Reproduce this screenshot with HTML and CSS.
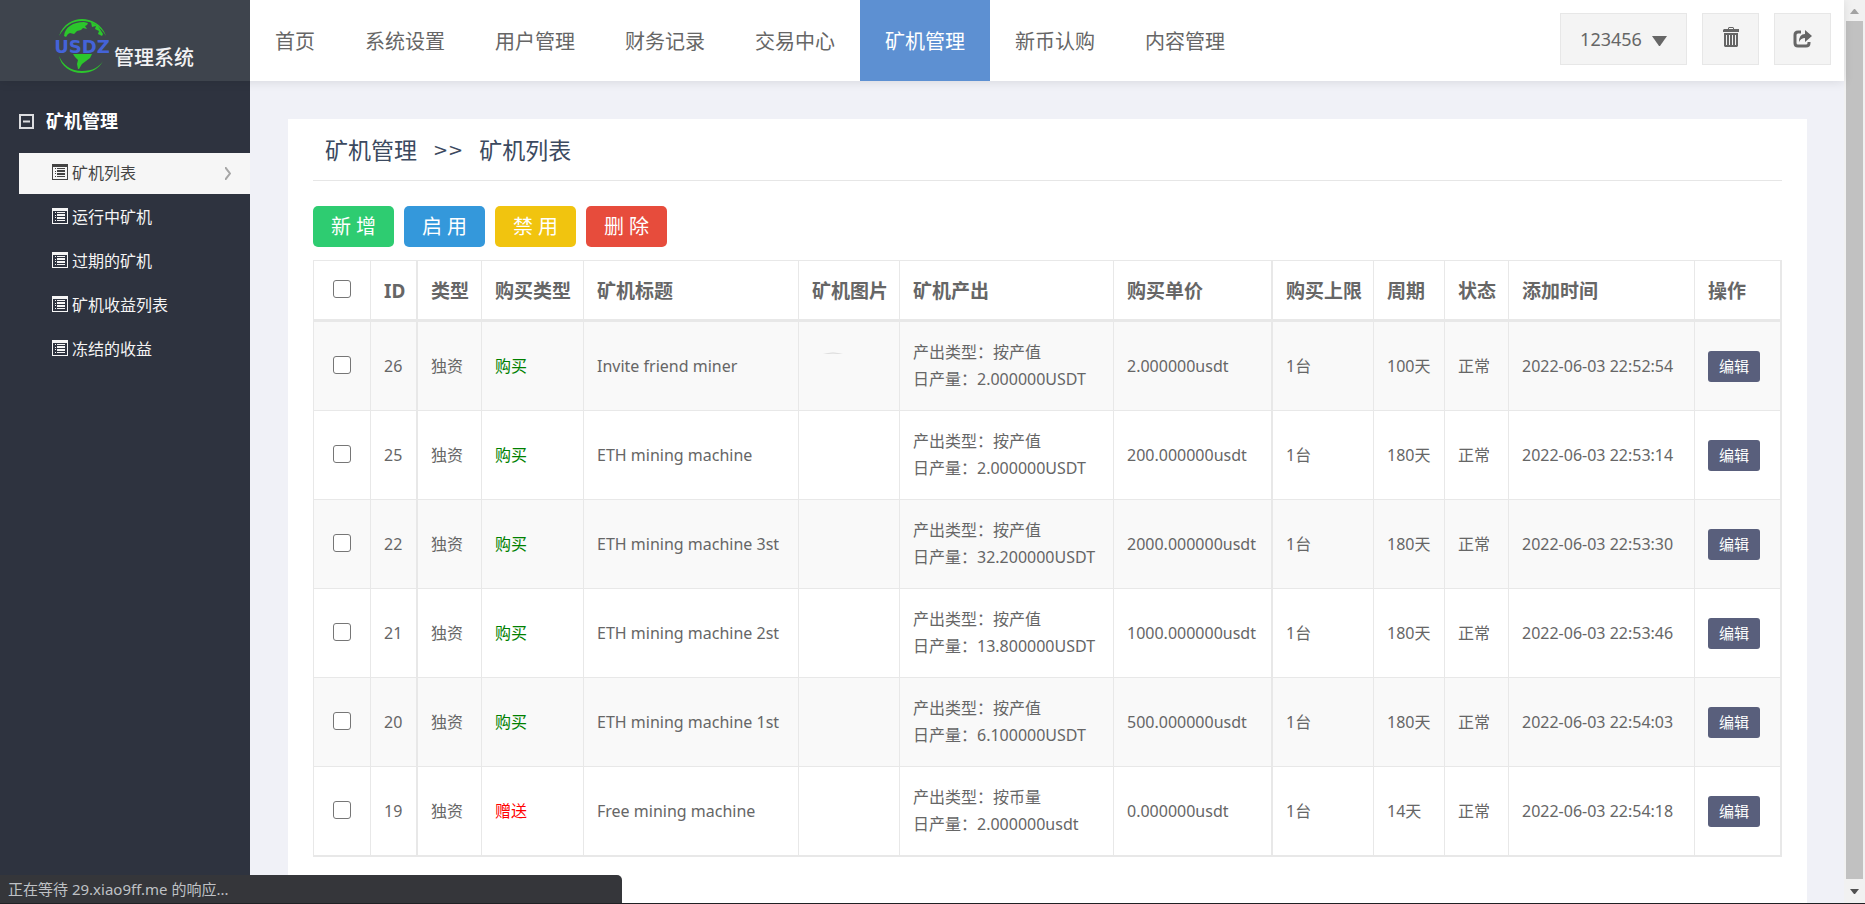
FILE: index.html
```html
<!DOCTYPE html>
<html lang="zh-CN">
<head>
<meta charset="utf-8">
<title>矿机列表 - 管理系统</title>
<link rel="stylesheet" href="styles.css">
</head>
<body>
<svg class="sprite" aria-hidden="true">
  <symbol id="list" viewBox="0 0 16 16">
    <path fill="currentColor" fill-rule="evenodd" d="M0 0h16v16H0zM1 3v12h14V3z"/>
    <path fill="currentColor" d="M3 4h1v1H3zM5 4h8v1H5zM3 7h1v1H3zM5 6h8v2H5zM3 9h1v1H3zM5 9h8v2H5zM3 12h1v1H3zM5 12h8v1H5z"/>
  </symbol>
</svg>
<div class="window">
  <div class="page">
    <header class="header">
      <a class="logo" href="#">
        <svg class="logo-mark" viewBox="0 0 58 54" role="img" aria-label="USDZ">
          <path fill="#2cc62c" d="M6 17C10 5 20 0 29 0s20 5 24 17C47 7 39 2 29 2S12 7 6 17z"/>
          <path fill="#2cc62c" d="M11 17C12 8 20 3 31 3l4 1-1 2-2 1 2 3-4-1-2 2-4 1-3 3-4-1-2 1-2 3zM38 3l7 4 5 8-1 2-4-2 1-3-4-2 1-3-4 1z"/>
          <path fill="#2cc62c" d="M20 35h19l-2 4-4 3-4 3-3 5-1 0-1-5 1-4-3-3zM6 37c4 9 12 15 23 15s17-4 21-10c-4 8-12 12-21 12C17 54 8 47 6 37z"/>
          <text class="logo-name" x="29" y="34" text-anchor="middle">USDZ</text>
        </svg>
        <span class="logo-text">管理系统</span>
      </a>
      <nav class="nav">
        <a href="#">首页</a><a href="#">系统设置</a><a href="#">用户管理</a><a href="#">财务记录</a><a href="#">交易中心</a><a class="active" href="#">矿机管理</a><a href="#">新币认购</a><a href="#">内容管理</a>
      </nav>
      <div class="tools">
        <button class="tool user" type="button">123456
          <svg width="15" height="10" viewBox="0 0 15 10"><path fill="currentColor" d="M0 0h15L8 10H7z"/></svg>
        </button>
        <button class="tool" type="button" aria-label="清除缓存">
          <svg class="trash" width="18" height="20" viewBox="0 0 18 20"><path fill="currentColor" fill-rule="evenodd" d="M6 2V1l1-1h4l1 1v1h5v3H1V3l1-1zM7 1v1h4V1zM2 6h14v13l-1 1H3l-1-1zM4 8v10h1V8zM7 8v10h1V8zM10 8v10h1V8zM13 8v10h1V8z"/></svg>
        </button>
        <button class="tool" type="button" aria-label="退出">
          <svg width="19" height="18" viewBox="0 0 19 18"><path fill="none" stroke="currentColor" stroke-width="3" d="M8 2H5Q2 2 2 5v8q0 3 3 3h8q3 0 3-3v-1"/><path fill="currentColor" d="M12 0l7 6-7 6V8Q8 8 6 12q0-8 6-8z"/></svg>
        </button>
      </div>
    </header>
    <div class="body">
      <aside class="sidebar">
        <h3 class="group">
          <svg width="15" height="15" viewBox="0 0 15 15"><path fill="none" stroke="currentColor" stroke-width="2" d="M1 1h13v13H1zM4 7.5h7"/></svg>
          矿机管理
        </h3>
        <a class="item current" href="#"><svg class="ico"><use href="#list"/></svg>矿机列表
          <svg class="arrow" viewBox="0 0 6 13"><path fill="none" stroke="#a6a6a6" stroke-width="2" d="M0 0l5 6.5L0 13"/></svg></a>
        <a class="item" href="#"><svg class="ico"><use href="#list"/></svg>运行中矿机</a>
        <a class="item" href="#"><svg class="ico"><use href="#list"/></svg>过期的矿机</a>
        <a class="item" href="#"><svg class="ico"><use href="#list"/></svg>矿机收益列表</a>
        <a class="item" href="#"><svg class="ico"><use href="#list"/></svg>冻结的收益</a>
      </aside>
      <main class="main">
        <section class="card">
          <h1 class="title"><span>矿机管理</span><span class="sep">&gt;&gt;</span><span>矿机列表</span></h1>
          <div class="actions">
            <button class="btn green" type="button">新 增</button>
            <button class="btn blue" type="button">启 用</button>
            <button class="btn yellow" type="button">禁 用</button>
            <button class="btn red" type="button">删 除</button>
          </div>
          <table class="grid">
            <colgroup><col class="w57"><col class="w47"><col class="w64"><col class="w102"><col class="w215"><col class="w101"><col class="w214"><col class="w159"><col class="w101"><col class="w71"><col class="w64"><col class="w186"><col class="w85"></colgroup>
            <thead>
              <tr><th class="check"><input type="checkbox" aria-label="全选"></th><th class="thick">ID</th><th>类型</th><th>购买类型</th><th>矿机标题</th><th>矿机图片</th><th>矿机产出</th><th class="thick">购买单价</th><th>购买上限</th><th>周期</th><th>状态</th><th>添加时间</th><th>操作</th></tr>
            </thead>
            <tbody>
              <tr><td class="check"><input type="checkbox" aria-label="26"></td><td class="thick">26</td><td>独资</td><td class="buy">购买</td><td>Invite friend miner</td><td class="pic"><svg width="24" height="4" viewBox="0 0 24 4"><path fill="#d5d5d5" d="M2 3q10-3 20 0-10-1-20 0z"/></svg></td><td>产出类型：按产值<br>日产量：2.000000USDT</td><td class="thick">2.000000usdt</td><td>1台</td><td>100天</td><td>正常</td><td>2022-06-03 22:52:54</td><td><button class="edit" type="button">编辑</button></td></tr>
              <tr><td class="check"><input type="checkbox" aria-label="25"></td><td class="thick">25</td><td>独资</td><td class="buy">购买</td><td>ETH mining machine</td><td></td><td>产出类型：按产值<br>日产量：2.000000USDT</td><td class="thick">200.000000usdt</td><td>1台</td><td>180天</td><td>正常</td><td>2022-06-03 22:53:14</td><td><button class="edit" type="button">编辑</button></td></tr>
              <tr><td class="check"><input type="checkbox" aria-label="22"></td><td class="thick">22</td><td>独资</td><td class="buy">购买</td><td>ETH mining machine 3st</td><td></td><td>产出类型：按产值<br>日产量：32.200000USDT</td><td class="thick">2000.000000usdt</td><td>1台</td><td>180天</td><td>正常</td><td>2022-06-03 22:53:30</td><td><button class="edit" type="button">编辑</button></td></tr>
              <tr><td class="check"><input type="checkbox" aria-label="21"></td><td class="thick">21</td><td>独资</td><td class="buy">购买</td><td>ETH mining machine 2st</td><td></td><td>产出类型：按产值<br>日产量：13.800000USDT</td><td class="thick">1000.000000usdt</td><td>1台</td><td>180天</td><td>正常</td><td>2022-06-03 22:53:46</td><td><button class="edit" type="button">编辑</button></td></tr>
              <tr><td class="check"><input type="checkbox" aria-label="20"></td><td class="thick">20</td><td>独资</td><td class="buy">购买</td><td>ETH mining machine 1st</td><td></td><td>产出类型：按产值<br>日产量：6.100000USDT</td><td class="thick">500.000000usdt</td><td>1台</td><td>180天</td><td>正常</td><td>2022-06-03 22:54:03</td><td><button class="edit" type="button">编辑</button></td></tr>
              <tr><td class="check"><input type="checkbox" aria-label="19"></td><td class="thick">19</td><td>独资</td><td class="gift">赠送</td><td>Free mining machine</td><td></td><td>产出类型：按币量<br>日产量：2.000000usdt</td><td class="thick">0.000000usdt</td><td>1台</td><td>14天</td><td>正常</td><td>2022-06-03 22:54:18</td><td><button class="edit" type="button">编辑</button></td></tr>
            </tbody>
          </table>
        </section>
      </main>
    </div>
  </div>
  <div class="scroll">
    <svg width="21" height="21" viewBox="0 0 21 21"><path fill="#a3a3a3" d="M6 14l4-5h1l4 5z"/></svg>
    <div class="thumb"></div>
    <svg width="21" height="24" viewBox="0 0 21 24"><path fill="#505050" d="M6 10h9l-4 5h-1z"/></svg>
  </div>
  <div class="status">正在等待 29.xiao9ff.me 的响应...</div>
</div>
</body>
</html>
```
FILE: styles.css
```css
* { box-sizing: border-box; }
body {
  margin: 0;
  height: 100vh;
  overflow: hidden;
  color: #666;
  background: #f0f1f7;
  font: 16px/27px "Noto Sans", "Noto Sans CJK SC", sans-serif;
}
a { color: inherit; text-decoration: none; }
button { font: inherit; color: inherit; margin: 0; padding: 0; border: 0; cursor: pointer; }
.sprite { position: absolute; width: 0; height: 0; }

.window { position: relative; display: flex; height: 100%; border-bottom: 1px solid #202124; }
.page { flex: 1; min-width: 0; display: flex; flex-direction: column; }

.header {
  position: relative;
  flex: none;
  display: flex;
  height: 81px;
  background: #fff;
  box-shadow: 0 1px 10px rgba(0, 0, 0, .1);
}
.logo {
  flex: none;
  display: flex;
  align-items: flex-start;
  width: 250px;
  padding: 19px 0 0 53px;
  background: #3e444d;
}
.logo-mark { width: 58px; height: 54px; overflow: visible; }
.logo-name { font: 700 18px "DejaVu Sans", sans-serif; fill: #4463d8; }
.logo-text { margin: 24px 0 0 3px; font-size: 20px; line-height: 30px; font-weight: 500; color: #f2f2f4; }
.nav { display: flex; font-size: 20px; }
.nav a { height: 81px; padding: 0 25px; line-height: 83px; white-space: nowrap; }
.nav .active { color: #fff; background: #5d90d2; }
.tools { display: flex; gap: 15px; margin: 13px 13px 0 auto; }
.tool {
  display: flex;
  align-items: center;
  justify-content: center;
  gap: 10px;
  width: 57px;
  height: 52px;
  font-size: 18px;
  background: #f4f4f4;
  border: 1px solid #e7e7e7;
}
.user { width: 127px; }
.user svg { margin-top: 4px; }
.trash { margin-bottom: 4px; }

.body { flex: 1; min-height: 0; display: flex; }
.sidebar { flex: none; width: 250px; padding: 27px 0 0 19px; background: #2e333f; }
.group {
  display: flex;
  align-items: center;
  gap: 12px;
  margin: 0 0 18px;
  font-size: 18px;
  color: #fff;
}
.group svg { color: #dcdde0; }
.item {
  display: flex;
  align-items: center;
  gap: 4px;
  height: 41px;
  margin-bottom: 3px;
  padding: 0 19px 0 33px;
  color: #f5f5f5;
}
.current { color: #444; background: #f6f6f6; }
.ico { width: 16px; height: 16px; margin-bottom: 3px; }
.arrow { width: 6px; height: 13px; margin-left: auto; }

.main { flex: 1; min-width: 0; padding: 38px 37px 0 38px; }
.card { height: 100%; padding: 0 25px; background: #fff; }
.title {
  display: flex;
  gap: 16px;
  margin: 0 0 25px;
  padding: 0 12px;
  height: 62px;
  line-height: 62px;
  font-size: 23px;
  font-weight: 400;
  color: #3c4a60;
  border-bottom: 1px solid #e6e6e6;
}
.sep { font-family: "DejaVu Sans", sans-serif; font-size: 18px; }
.actions { display: flex; gap: 10px; margin-bottom: 13px; }
.btn { width: 81px; height: 41px; font-size: 20px; color: #fff; border-radius: 5px; }
.green { background: #2ecc71; }
.blue { background: #3498db; }
.yellow { background: #f1c40f; }
.red { background: #e74c3c; }

.grid {
  width: 100%;
  table-layout: fixed;
  border-collapse: separate;
  border-spacing: 0;
  border: 1px solid #e8e8e8;
  border-width: 1px 2px 1px 1px;
}
.w47 { width: 47px; } .w57 { width: 57px; } .w64 { width: 64px; } .w71 { width: 71px; }
.w85 { width: 85px; } .w101 { width: 101px; } .w102 { width: 102px; } .w159 { width: 159px; }
.w186 { width: 186px; } .w214 { width: 214px; } .w215 { width: 215px; }
.grid th, .grid td {
  padding: 0 0 0 13px;
  text-align: left;
  white-space: nowrap;
  border: 0 solid #e8e8e8;
  border-width: 0 1px 1px 0;
}
.grid th { height: 61px; padding-top: 3px; font-size: 19px; border-bottom-width: 3px; }
.grid td { height: 89px; }
.grid .thick { border-right-width: 2px; }
.grid th:last-child, .grid td:last-child { border-right-width: 0; }
.grid tbody tr:nth-child(odd) { background: #f9f9f9; }
.grid .check { padding: 0 0 2px 19px; line-height: 0; }
.check input {
  appearance: none;
  width: 18px;
  height: 18px;
  margin: 0;
  background: #fff;
  border: 1px solid #767676;
  border-radius: 3px;
}
.grid .buy { color: #008000; }
.grid .gift { color: #f00; }
.grid .pic { padding: 27px 0 0 22px; vertical-align: top; line-height: 0; }
.edit {
  display: block;
  width: 52px;
  height: 31px;
  font-size: 15px;
  color: #fff;
  background: #595f7c;
  border-radius: 3px;
}

.scroll { flex: none; display: flex; flex-direction: column; width: 21px; background: #f1f1f1; }
.scroll svg { flex: none; display: block; }
.thumb { flex: 1; margin: 0 2px; background: #c1c1c1; }

.status {
  position: absolute;
  left: 0;
  bottom: 0;
  width: 622px;
  height: 28px;
  padding-left: 8px;
  font-size: 15px;
  line-height: 28px;
  color: #bfc1c5;
  background: #35363a;
  border-radius: 0 5px 0 0;
}
```
